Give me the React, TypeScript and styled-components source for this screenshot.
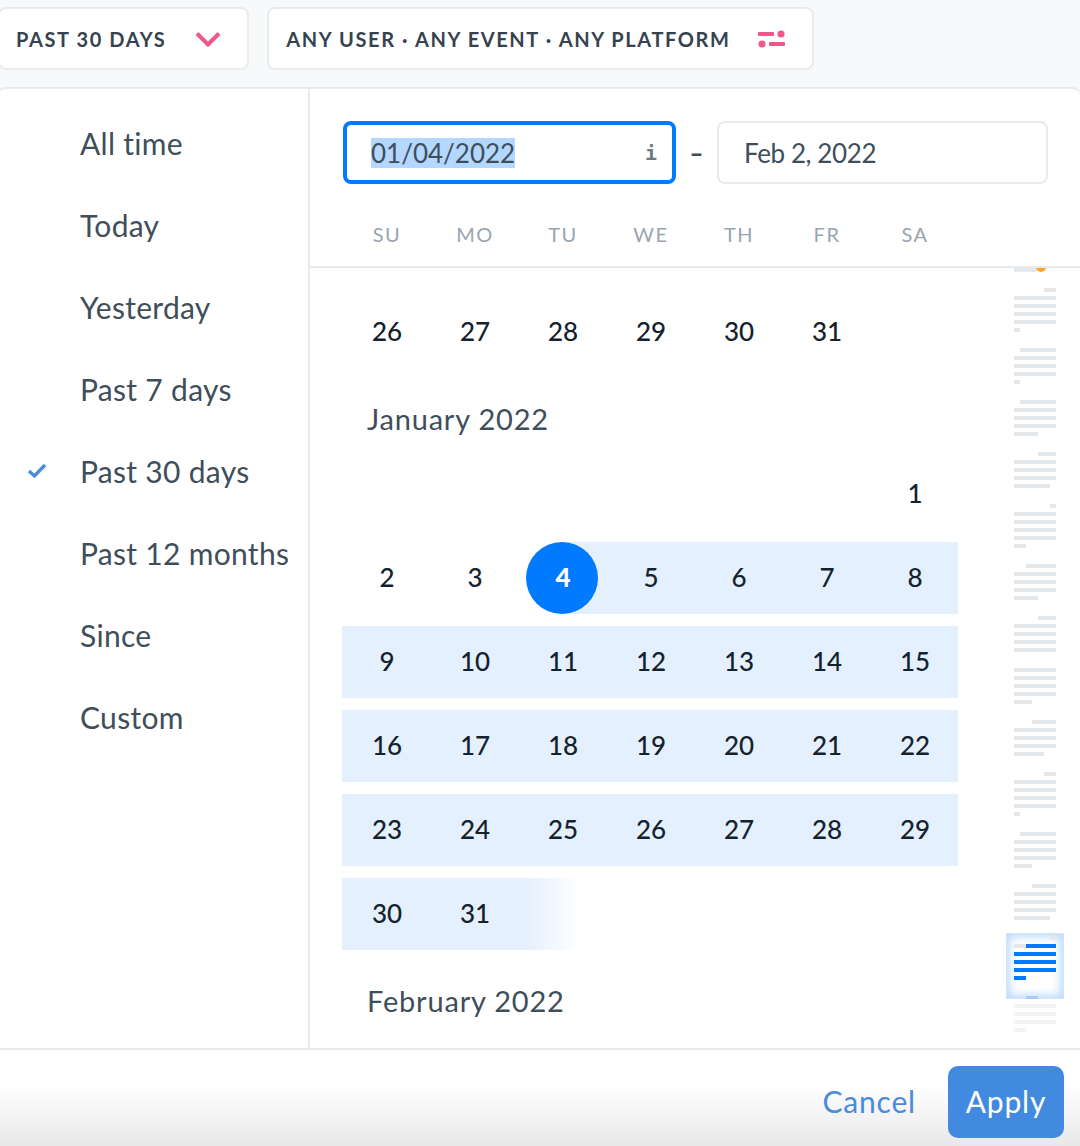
import React from "react";
import styled, { createGlobalStyle } from "styled-components";

const GlobalStyle = createGlobalStyle`
  html, body {
    margin: 0;
    padding: 0;
    height: 1146px;
    overflow: hidden;
    background: #f8f9fa;
    font-family: "Lato", "Open Sans", sans-serif;
  }
  * { box-sizing: border-box; }
`;

const Page = styled.div`
  display: flex;
  flex-direction: column;
  height: 1146px;
  width: 1080px;
  overflow: hidden;
`;

const TopBar = styled.div`
  display: flex;
  gap: 18px;
  height: 87px;
  padding-top: 7px;
  margin-left: -2px;
`;

const FilterButton = styled.button<{ $gap: number; $left: number }>`
  display: flex;
  align-items: center;
  gap: ${({ $gap }) => $gap}px;
  height: 63px;
  padding: 0 26px 0 ${({ $left }) => $left}px;
  background: #fff;
  border: 2px solid #e9ebed;
  border-radius: 8px;
  color: #36434f;
  font-family: inherit;
  font-size: 20px;
  font-weight: 700;
  letter-spacing: 1.6px;
  white-space: nowrap;
`;

const Panel = styled.div`
  flex: 1;
  display: flex;
  flex-direction: column;
  min-height: 0;
  margin-left: -3px;
  background: #fff;
  border-top: 2px solid #e8eaec;
  border-left: 2px solid #e8eaec;
  border-radius: 8px 8px 0 0;
`;

const PanelBody = styled.div`
  flex: 1;
  display: flex;
  min-height: 0;
`;

const Sidebar = styled.nav`
  width: 311px;
  flex: none;
  padding-top: 13px;
  border-right: 2px solid #e8eaec;
`;

const PresetItem = styled.div`
  display: flex;
  align-items: center;
  height: 82px;
  color: #3f4e5b;
  font-size: 30px;
  letter-spacing: 0.3px;
`;

const CheckSlot = styled.span`
  display: flex;
  align-items: center;
  width: 81px;
  flex: none;
  padding-left: 28px;
`;

const CalendarPane = styled.div`
  flex: 1;
  display: flex;
  flex-direction: column;
  min-width: 0;
`;

const PaneHeader = styled.div`
  flex: none;
  padding: 32px 0 20px 33px;
  border-bottom: 2px solid #e8eaec;
`;

const DateRow = styled.div`
  display: flex;
  align-items: center;
  height: 63px;
  margin-bottom: 38px;
`;

const DateField = styled.div<{ $focused?: boolean }>`
  display: flex;
  align-items: center;
  justify-content: space-between;
  width: ${({ $focused }) => ($focused ? 333 : 331)}px;
  height: 63px;
  padding: ${({ $focused }) => ($focused ? "0 15px 0 24px" : "0 0 0 25px")};
  border: ${({ $focused }) => ($focused ? "4px solid #007aff" : "2px solid #e8eaec")};
  border-radius: 8px;
  color: #3f4e5b;
  font-size: 26px;
  letter-spacing: ${({ $focused }) => ($focused ? 0 : -0.4)}px;
`;

const SelectedText = styled.span`
  background: #b3d7ff;
  line-height: 30px;
`;

const InfoMark = styled.span`
  color: #6c7a87;
  font-family: "DejaVu Sans Mono", monospace;
  font-size: 20px;
  font-weight: 700;
`;

const DateDash = styled.span`
  width: 41px;
  text-align: center;
  color: #3f4e5b;
  font-size: 24px;
  font-weight: 900;
`;

const DayGrid = styled.div`
  display: grid;
  grid-template-columns: repeat(7, 88px);
  width: 616px;
`;

const WeekdayCell = styled.div`
  height: 24px;
  line-height: 24px;
  text-align: center;
  color: #98a4af;
  font-size: 20px;
  letter-spacing: 1.5px;
`;

const ScrollArea = styled.div`
  position: relative;
  flex: 1;
  min-height: 0;
  overflow: hidden;
  padding: 28px 0 0 32px;
`;

const MonthDays = styled(DayGrid)`
  row-gap: 12px;
`;

const MonthTitle = styled.h3`
  margin: 35px 0 23px 25px;
  height: 32px;
  line-height: 32px;
  color: #3f4e5b;
  font-size: 29px;
  font-weight: 400;
  letter-spacing: 0.8px;
`;

type DayKind = "plain" | "range" | "start" | "fade";

const dayBackground: Record<DayKind, string> = {
  plain: "transparent",
  range: "#e4f0fe",
  start: "linear-gradient(to right, transparent 50%, #e4f0fe 50%)",
  fade: "linear-gradient(to right, #e4f0fe 8%, rgba(228, 240, 254, 0) 72%)",
};

const DayCell = styled.div<{ $kind: DayKind }>`
  display: flex;
  align-items: center;
  justify-content: center;
  height: 72px;
  padding: ${({ $kind }) => ($kind === "start" ? "0" : "0 0 2px 2px")};
  background: ${({ $kind }) => dayBackground[$kind]};
  color: #14222e;
  font-size: 26px;
  font-weight: 500;
`;

const StartCircle = styled.span`
  display: flex;
  align-items: center;
  justify-content: center;
  width: 72px;
  height: 72px;
  padding: 0 0 2px 2px;
  border-radius: 50%;
  background: #007aff;
  color: #fff;
  font-weight: 900;
`;

const MinimapDrawing = styled.svg`
  position: absolute;
  top: 0;
  right: 0;
`;

const MinimapWindow = styled.div`
  position: absolute;
  top: 665px;
  right: 16px;
  width: 58px;
  height: 66px;
  background: #fff;
  border: 1px solid #d3e5fb;
  box-shadow: inset 0 0 9px 3px #bcdafc;
`;

const Footer = styled.footer`
  flex: none;
  display: flex;
  align-items: flex-start;
  justify-content: flex-end;
  gap: 32px;
  height: 98px;
  padding: 16px 16px 0 0;
  border-top: 2px solid #e6e8eb;
  background: linear-gradient(to bottom, #fff 35%, #e8e8e8 100%);
`;

const CancelButton = styled.button`
  height: 72px;
  padding: 0 0 2px;
  border: none;
  background: none;
  color: #4a8bdc;
  font-family: inherit;
  font-size: 30px;
  letter-spacing: 0.8px;
`;

const ApplyButton = styled.button`
  width: 116px;
  height: 72px;
  padding: 0 0 2px;
  border: none;
  border-radius: 10px;
  background: #428adf;
  color: #fff;
  font-family: inherit;
  font-size: 30px;
  letter-spacing: 0.8px;
`;

const Chevron = () => (
  <svg width="26" height="16" viewBox="0 0 26 16" fill="none">
    <path d="M2 2.5 L13 13.5 L24 2.5" stroke="#f0588a" strokeWidth="4" />
  </svg>
);

const SlidersIcon = () => (
  <svg width="28" height="18" viewBox="0 0 28 18" fill="#f0588a">
    <rect x="0" y="2" width="16" height="4" rx="1" />
    <circle cx="23" cy="4" r="3.6" />
    <circle cx="4" cy="14" r="3.6" />
    <rect x="11" y="12" width="16" height="4" rx="1" />
  </svg>
);

const CheckIcon = () => (
  <svg width="20" height="16" viewBox="0 0 20 16" fill="none">
    <path d="M2 8 L7.5 13 L18 2" stroke="#4a8bdc" strokeWidth="3.4" />
  </svg>
);

const presets = [
  "All time",
  "Today",
  "Yesterday",
  "Past 7 days",
  "Past 30 days",
  "Past 12 months",
  "Since",
  "Custom",
];

const weekdays = ["SU", "MO", "TU", "WE", "TH", "FR", "SA"];

type Day = { label?: number; kind: DayKind };

const dayList = (from: number, to: number, kind: DayKind): Day[] => {
  const days: Day[] = [];
  for (let d = from; d <= to; d++) days.push({ label: d, kind });
  return days;
};

const blanks = (count: number): Day[] => Array.from({ length: count }, () => ({ kind: "plain" as DayKind }));

const december = dayList(26, 31, "plain");

const january: Day[] = [
  ...blanks(6),
  ...dayList(1, 3, "plain"),
  { label: 4, kind: "start" },
  ...dayList(5, 31, "range"),
  { kind: "fade" },
];

// minimap rows: [top, left, right], page coordinates
const greyBars: number[][] = [
  [268, 1014, 1036],
  [288, 1044, 1056], [296, 1014, 1056], [304, 1014, 1056], [312, 1014, 1056], [320, 1014, 1056], [328, 1014, 1020],
  [348, 1020, 1056], [356, 1014, 1056], [364, 1014, 1056], [372, 1014, 1056], [380, 1014, 1020],
  [400, 1020, 1056], [408, 1014, 1056], [416, 1014, 1056], [424, 1014, 1056], [432, 1014, 1038],
  [452, 1038, 1056], [460, 1014, 1056], [468, 1014, 1056], [476, 1014, 1056], [484, 1014, 1050],
  [504, 1050, 1056], [512, 1014, 1056], [520, 1014, 1056], [528, 1014, 1056], [536, 1014, 1056], [544, 1014, 1026],
  [564, 1026, 1056], [572, 1014, 1056], [580, 1014, 1056], [588, 1014, 1056], [596, 1014, 1038],
  [616, 1038, 1056], [624, 1014, 1056], [632, 1014, 1056], [640, 1014, 1056], [648, 1014, 1056],
  [668, 1014, 1056], [676, 1014, 1056], [684, 1014, 1056], [692, 1014, 1056], [700, 1014, 1032],
  [720, 1032, 1056], [728, 1014, 1056], [736, 1014, 1056], [744, 1014, 1056], [752, 1014, 1044],
  [772, 1044, 1056], [780, 1014, 1056], [788, 1014, 1056], [796, 1014, 1056], [804, 1014, 1056], [812, 1014, 1020],
  [832, 1020, 1056], [840, 1014, 1056], [848, 1014, 1056], [856, 1014, 1056], [864, 1014, 1032],
  [884, 1032, 1056], [892, 1014, 1056], [900, 1014, 1056], [908, 1014, 1056], [916, 1014, 1050],
  [936, 1050, 1056], [944, 1014, 1026],
];

const blueBars: number[][] = [
  [944, 1026, 1056], [952, 1014, 1056], [960, 1014, 1056], [968, 1014, 1056], [976, 1014, 1026],
];

const fadedBars: number[][] = [
  [1004, 1014, 1056], [1012, 1014, 1056], [1020, 1014, 1056], [1028, 1014, 1026],
];

const Minimap = () => (
  <>
    <MinimapWindow />
    <MinimapDrawing width="80" height="780" viewBox="1000 268 80 780">
      {greyBars.map(([y, x1, x2]) => (
        <rect key={`g${y}`} x={x1} y={y} width={x2 - x1} height="4" fill="#e5e8eb" />
      ))}
      {blueBars.map(([y, x1, x2]) => (
        <rect key={`b${y}`} x={x1} y={y} width={x2 - x1} height="4" fill="#007aff" />
      ))}
      {fadedBars.map(([y, x1, x2]) => (
        <rect key={`f${y}`} x={x1} y={y} width={x2 - x1} height="4" fill="#f1f3f4" />
      ))}
      <rect x="1026" y="996" width="12" height="3" fill="#a9cdf7" />
      <circle cx="1041" cy="267" r="5" fill="#f5a623" />
    </MinimapDrawing>
  </>
);

const Month = ({ days }: { days: Day[] }) => (
  <MonthDays>
    {days.map((day, i) => (
      <DayCell key={i} $kind={day.kind}>
        {day.kind === "start" ? <StartCircle>{day.label}</StartCircle> : day.label}
      </DayCell>
    ))}
  </MonthDays>
);

export default function App() {
  return (
    <Page>
      <GlobalStyle />
      <TopBar>
        <FilterButton $gap={29} $left={16}>
          PAST 30 DAYS
          <Chevron />
        </FilterButton>
        <FilterButton $gap={27} $left={17}>
          ANY USER · ANY EVENT · ANY PLATFORM
          <SlidersIcon />
        </FilterButton>
      </TopBar>
      <Panel>
        <PanelBody>
          <Sidebar>
            {presets.map((preset) => (
              <PresetItem key={preset}>
                <CheckSlot>{preset === "Past 30 days" && <CheckIcon />}</CheckSlot>
                {preset}
              </PresetItem>
            ))}
          </Sidebar>
          <CalendarPane>
            <PaneHeader>
              <DateRow>
                <DateField $focused>
                  <SelectedText>01/04/2022</SelectedText>
                  <InfoMark>i</InfoMark>
                </DateField>
                <DateDash>–</DateDash>
                <DateField>Feb 2, 2022</DateField>
              </DateRow>
              <DayGrid>
                {weekdays.map((d) => (
                  <WeekdayCell key={d}>{d}</WeekdayCell>
                ))}
              </DayGrid>
            </PaneHeader>
            <ScrollArea>
              <Month days={december} />
              <MonthTitle>January 2022</MonthTitle>
              <Month days={january} />
              <MonthTitle>February 2022</MonthTitle>
              <Minimap />
            </ScrollArea>
          </CalendarPane>
        </PanelBody>
        <Footer>
          <CancelButton>Cancel</CancelButton>
          <ApplyButton>Apply</ApplyButton>
        </Footer>
      </Panel>
    </Page>
  );
}
